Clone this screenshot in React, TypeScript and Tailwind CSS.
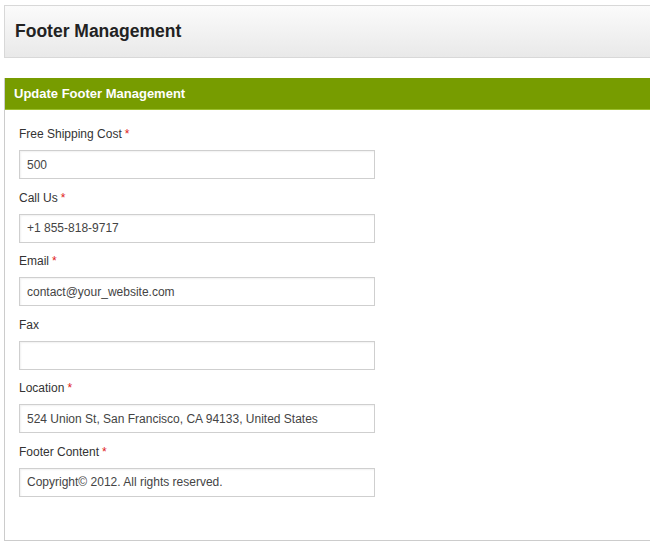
const fields = [
  { label: 'Free Shipping Cost', required: true, value: '500' },
  { label: 'Call Us', required: true, value: '+1 855-818-9717' },
  { label: 'Email', required: true, value: 'contact@your_website.com' },
  { label: 'Fax', required: false, value: '' },
  { label: 'Location', required: true, value: '524 Union St, San Francisco, CA 94133, United States' },
  { label: 'Footer Content', required: true, value: 'Copyright© 2012. All rights reserved.' },
];

function Field({ label, required, value }: { label: string; required: boolean; value: string }) {
  return (
    <div className="mb-[10.5px]">
      <label className="block h-4 leading-4 mb-2 text-[12px] text-[#333]">
        {label}
        {required && <span className="text-[#e02020] ml-[3px]">*</span>}
      </label>
      <input
        readOnly
        value={value}
        className="block w-[356px] h-[29px] px-[7px] border border-[#cfcfcf] bg-white text-[12px] text-[#444] shadow-[inset_1px_1px_2px_rgba(0,0,0,0.06)] outline-none"
      />
    </div>
  );
}

export default function App() {
  return (
    <div className="w-[650px] h-[544px] overflow-hidden bg-white pl-1 pt-[5px] font-['Liberation_Sans',Arial,sans-serif]">
      <div className="h-[53px] flex items-center pl-[10px] border-t border-b border-l border-[#d8d8d8] bg-gradient-to-b from-[#fbfbfb] to-[#e9e9e9]">
        <h1 className="text-[17.5px] font-bold text-[#222]">Footer Management</h1>
      </div>

      <section className="mt-5 border-l border-b border-[#cccccc] h-[463px]">
        <div className="h-8 flex items-center pl-[9px] bg-[#779c00] border-b border-[#9cbf2e]">
          <h2 className="text-[13px] font-bold text-white">Update Footer Management</h2>
        </div>
        <form className="pl-[14px] pt-4">
          {fields.map((f) => (
            <Field key={f.label} {...f} />
          ))}
        </form>
      </section>
    </div>
  );
}
